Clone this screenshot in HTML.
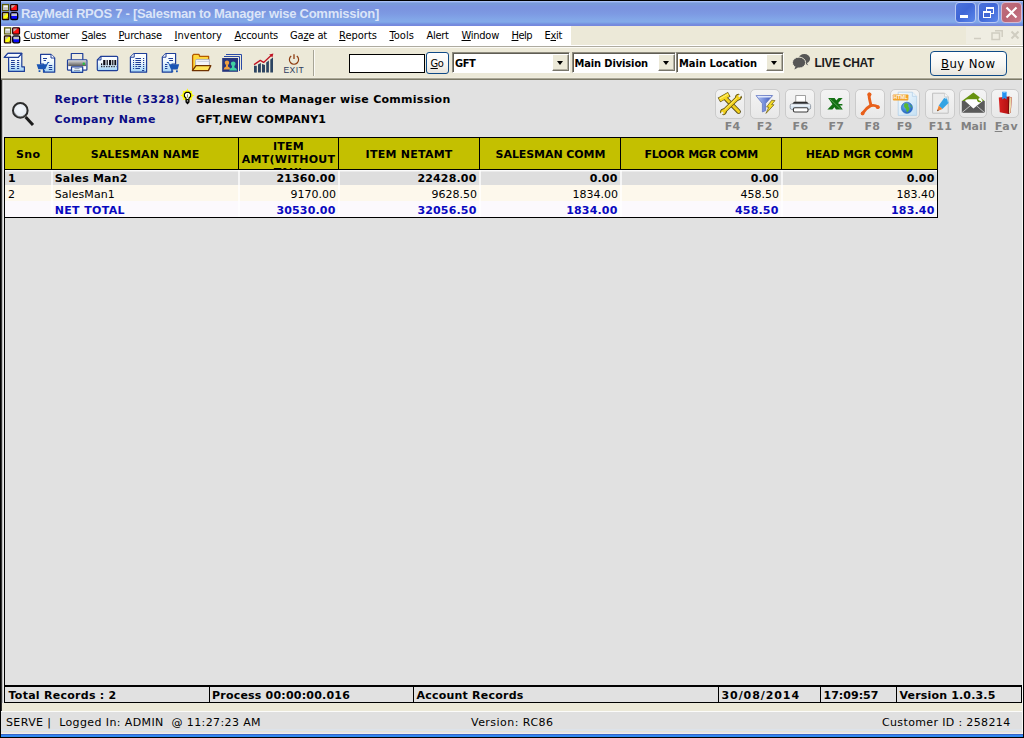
<!DOCTYPE html>
<html>
<head>
<meta charset="utf-8">
<title>RayMedi RPOS 7 - [Salesman to Manager wise Commission]</title>
<style>
*{box-sizing:border-box;margin:0;padding:0}
html,body{width:1024px;height:738px;overflow:hidden}
body{position:relative;background:#e1e1e1;font-family:"DejaVu Sans","Liberation Sans",sans-serif;font-size:11px;color:#000}
.a{position:absolute}
.t{position:absolute;white-space:pre;line-height:1}
u{text-decoration:underline;text-underline-offset:1px;text-decoration-thickness:1px}
svg{position:absolute;overflow:visible}
/* title bar */
#title{left:1px;top:1px;width:1022px;height:25px;background:linear-gradient(to bottom,#a9c0f5 0px,#a9c0f5 1px,#8aa8e8 1px,#8aa8e8 2px,#7a9adb 2px,#7a9adb 4px,#7b94e0 5px,#7b95e0 9px,#7d9ae3 13px,#82a6e8 18px,#82aae9 21px,#7a9ee4 22px,#7690e0 23px,#7488dd 24px,#7488dd 25px)}
.cb{position:absolute;top:2px;width:21px;height:21px;border-radius:4px;border:1px solid #b9c9f3;background:linear-gradient(135deg,#4a72dc 0%,#3f66d6 45%,#5a86ea 100%)}
.cb.x{background:linear-gradient(135deg,#c0707e 0%,#b96474 50%,#c87888 100%);border-color:#d5b9d0}
/* menu bar */
#menuw{left:1px;top:26px;width:570px;height:20px;background:#fff}
#menub{left:571px;top:26px;width:451px;height:20px;background:#ece9d8}
#mdi{left:966px;top:27px;width:56px;height:17px;background:#efede2}
#ml1{left:1px;top:45px;width:1022px;height:1px;background:#fff}
#ml2{left:1px;top:46px;width:1022px;height:1px;background:#aeaba0}
#ml3{left:1px;top:47px;width:1022px;height:1px;background:#fbfaf4}
/* toolbar */
#toolbar{left:1px;top:48px;width:1021px;height:30px;background:#ece9d8}
#tbbot{left:1px;top:77px;width:1021px;height:3px;background:linear-gradient(#efecde 0,#efecde 1px,#aaa796 1px,#aaa796 2px,#7c7a68 2px)}
#tsep{left:313px;top:50px;width:1px;height:26px;background:#a7a596}
#tsep2{left:314px;top:50px;width:1px;height:26px;background:#fbfaf5}
#srch{left:349px;top:54px;width:76px;height:19px;background:#fff;border:1px solid #000}
.btn{position:absolute;border:1px solid #0f4a86;border-radius:3px;background:linear-gradient(#ffffff 0%,#f6f5f1 60%,#e6e4dc 100%)}
.combo{position:absolute;top:52px;height:21px;background:#fff;border:1px solid;border-color:#8e8b7e #fff #fff #8e8b7e;box-shadow:inset 1px 1px 0 #5f5d54}
.combo i{position:absolute;right:0;top:1px;width:17px;height:17px;background:#ece9d8;border:1px solid;border-color:#fff #77756a #77756a #fff;box-shadow:inset -1px -1px 0 #b3b0a2}
.combo i:after{content:"";position:absolute;left:4px;top:6px;border:3.5px solid transparent;border-top:4px solid #000;border-bottom:0;width:0;height:0}
/* report toolbar buttons */
.rb{position:absolute;top:89px;width:30px;height:30px;border:1px solid #cbcbcb;border-radius:5px;background:linear-gradient(#f4f4f4,#e8e8e8)}
/* table */
#thead{left:4px;top:137px;width:934px;height:33px;background:#000}
.th{position:absolute;top:1px;height:31px;background:#c4c000;overflow:hidden}
.row{position:absolute;left:5px;width:932px;height:16px}
.cs{position:absolute;top:170px;width:2px;height:47px;background:rgba(255,255,255,.7)}
#tleft{left:4px;top:137px;width:1px;height:549px;background:#000}
#tright{left:937px;top:137px;width:1px;height:81px;background:#000}
#tbot{left:4px;top:217px;width:934px;height:1px;background:#000}
/* status */
#sbar{left:4px;top:685px;width:1018px;height:18px;border:1px solid #000;border-top-width:2px;background:#e1e1e1}
.ss{position:absolute;top:686px;width:1px;height:16px;background:#000}
#beige{left:1px;top:703px;width:1021px;height:8px;background:#ece9d8}
#bbar{left:1px;top:711px;width:1021px;height:18px;background:#e0e0e0;border-top:1px solid #fcfcfa}
#bb1{left:1px;top:729px;width:1021px;height:5px;background:linear-gradient(#dde3ea 0,#dde3ea 2px,#e2e4d6 2px,#e2e4d6 3px,#eadfea 3px,#eadfea 4px,#eef0e6 4px)}
#bb2{left:0;top:737px;width:1024px;height:1px;background:#000}
#blue{left:1px;top:734px;width:1022px;height:3px;background:linear-gradient(#3a64c8 0,#3a64c8 1px,#3088f0 1px)}
</style>
</head>
<body>
<div class="a" id="title"></div>
<div class="cb" style="left:955px"><div class="a" style="left:4px;top:12px;width:8px;height:3px;background:#fff"></div></div>
<div class="cb" style="left:978px">
 <div class="a" style="left:7px;top:4px;width:8px;height:7px;border:1px solid #fff;border-top-width:2px"></div>
 <div class="a" style="left:4px;top:8px;width:8px;height:7px;border:1px solid #fff;border-top-width:2px;background:#4268d6"></div>
</div>
<div class="cb x" style="left:1001px"><svg width="19" height="19" style="left:0;top:0" viewBox="0 0 19 19"><path d="M4.5 4.5 L14.5 14.5 M14.5 4.5 L4.5 14.5" stroke="#fff" stroke-width="2.2" stroke-linecap="butt" fill="none"/></svg></div>
<div class="a" id="menuw"></div>
<div class="a" id="menub"></div>
<div class="a" id="mdi"></div>
<svg width="60" height="14" style="left:968px;top:29px" viewBox="0 0 60 14">
 <g fill="none" stroke="#d0cdc1" stroke-width="1.5">
  <path d="M6 9.5 H13"/>
  <path d="M27 1.8 H34.2 V8" /><rect x="24" y="4" width="7.5" height="6.5"/>
  <path d="M43.5 2.5 L50.5 9.5 M50.5 2.5 L43.5 9.5" stroke-width="2"/>
 </g>
</svg>
<div class="a" id="ml1"></div>
<div class="a" id="ml2"></div>
<div class="a" id="ml3"></div>
<div class="a" id="toolbar"></div>
<div class="a" id="tbbot"></div>
<div class="a" id="tsep"></div><div class="a" id="tsep2"></div>
<div class="a" id="srch"></div>
<div class="btn" style="left:426px;top:52px;width:23px;height:22px"></div>
<div class="combo" style="left:452px;width:118px"><i></i></div>
<div class="combo" style="left:572px;width:104px"><i></i></div>
<div class="combo" style="left:676px;width:108px"><i></i></div>
<div class="btn" style="left:930px;top:51px;width:77px;height:25px;border-radius:4px"></div>
<!-- app icon (title + menu) -->
<svg width="17" height="17" style="left:2px;top:4px" viewBox="0 0 17 17">
 <g>
  <rect x="0.6" y="0.6" width="6" height="6" fill="#f6f6f6" stroke="#5c5c08" stroke-width="1.3"/>
  <rect x="1.3" y="3.2" width="4.6" height="2.7" fill="#c4c4c4"/>
  <rect x="8.7" y="0.5" width="6.8" height="6.2" rx="0.8" fill="#ff1010" stroke="#1c0000" stroke-width="1.25"/>
  <path d="M9.4 1.2 H13.6 L9.4 4.6 Z" fill="#b4b4b4"/>
  <rect x="0.5" y="8.7" width="6.2" height="6.8" rx="0.6" fill="#ffff10" stroke="#220404" stroke-width="1.3"/>
  <path d="M1.3 9.5 H5 L1.3 12.6 Z" fill="#b4b4b4"/>
  <path d="M4.2 15 H6.2 V12.6 Z" fill="#8a8a10"/>
  <rect x="8.7" y="8.7" width="7" height="6.8" rx="1.6" fill="#0a0aff" stroke="#000" stroke-width="1.3"/>
  <path d="M9.4 9.4 H15 V12 H9.4 Z" fill="#c4c4c4"/>
 </g>
</svg>
<svg width="17" height="17" style="left:4px;top:27px" viewBox="0 0 17 17">
 <g transform="translate(0,0.3)">
  <rect x="0.6" y="0.6" width="6" height="6" fill="#f6f6f6" stroke="#5c5c08" stroke-width="1.3"/>
  <rect x="1.3" y="3.2" width="4.6" height="2.7" fill="#c4c4c4"/>
  <rect x="8.7" y="0.5" width="6.8" height="6.2" rx="0.8" fill="#ff1010" stroke="#1c0000" stroke-width="1.25"/>
  <path d="M9.4 1.2 H13.6 L9.4 4.6 Z" fill="#b4b4b4"/>
  <rect x="0.5" y="8.7" width="6.2" height="6.8" rx="0.6" fill="#ffff10" stroke="#220404" stroke-width="1.3"/>
  <path d="M1.3 9.5 H5 L1.3 12.6 Z" fill="#b4b4b4"/>
  <path d="M4.2 15 H6.2 V12.6 Z" fill="#8a8a10"/>
  <rect x="8.7" y="8.7" width="7" height="6.8" rx="1.6" fill="#0a0aff" stroke="#000" stroke-width="1.3"/>
  <path d="M9.4 9.4 H15 V12 H9.4 Z" fill="#c4c4c4"/>
 </g>
</svg>
<!--TB0-->
<svg width="1024" height="140" style="left:0;top:0" viewBox="0 0 1024 140">
<defs>
 <linearGradient id="gb" x1="0" y1="0" x2="0" y2="1"><stop offset="0" stop-color="#ffffff"/><stop offset="0.45" stop-color="#eef7fd"/><stop offset="1" stop-color="#9fd2f6"/></linearGradient>
 <linearGradient id="gp" x1="0" y1="0" x2="0" y2="1"><stop offset="0" stop-color="#d8d8d8"/><stop offset="1" stop-color="#585858"/></linearGradient>
 <linearGradient id="gf" x1="0" y1="0" x2="1" y2="0"><stop offset="0" stop-color="#b4c6f4"/><stop offset="0.55" stop-color="#6f88d8"/><stop offset="1" stop-color="#3c55b0"/></linearGradient>
 <radialGradient id="gg" cx="0.4" cy="0.35" r="0.7"><stop offset="0" stop-color="#6fb8f0"/><stop offset="1" stop-color="#1c5fc0"/></radialGradient>
 <linearGradient id="gh" x1="0" y1="0" x2="1" y2="1"><stop offset="0" stop-color="#ffffff"/><stop offset="1" stop-color="#cfe6f6"/></linearGradient>
</defs>
<g stroke-linejoin="round" stroke-linecap="butt">
<!-- 1 scroll report -->
<g stroke="#1f3f98" stroke-width="1.2">
 <path d="M8.6 57.4 V71.4 H24.4 V66.8 H21.8 V53.4 H7.8 L4.3 57.4 H18.2 L21.8 53.4 M8.6 57.4 H18" fill="url(#gb)"/>
 <path d="M4.3 57.4 L7.8 53.4 H21.8 L18.2 57.4 Z" fill="#f4f9fd"/>
</g>
<g stroke="#1f3f98" stroke-width="1" fill="none">
 <path d="M11 60.5 H14.8 M17 60.5 H19.2 M11 62.5 H14.8 M17 62.5 H19.2 M11 64.5 H14.8 M17 64.5 H19.2 M11 66.5 H14.8 M17 66.5 H19.2 M11 68.5 H14.8 M17 68.5 H19.2"/>
</g>
<!-- 2 document + cart -->
<path d="M40.6 54.3 H51 L54.7 58 V72.2 H43.5 V64 H40.6 Z" fill="url(#gb)" stroke="#1f3f98" stroke-width="1.2"/>
<path d="M51 54.3 V58 H54.7" fill="#fff" stroke="#1f3f98" stroke-width="1"/>
<path d="M43 58.5 H47 M43.6 60.5 H46 M48.8 65.5 H52.2 M48.8 67.5 H52.2 M48.8 69.5 H52.2" stroke="#1f3f98" stroke-width="1" fill="none"/>
<path d="M36.6 64.3 H46.4 L47.6 62 H49.2 V63 H48.2 L45.3 69.2 H38.3 Z" fill="#1a55b4"/>
<rect x="38.6" y="70.2" width="1.8" height="1.8" fill="#1a55b4"/><rect x="43.2" y="70.2" width="1.8" height="1.8" fill="#1a55b4"/>
<!-- 3 printer -->
<rect x="71.3" y="53.5" width="11.5" height="7" fill="#efece0" stroke="#1f3f98" stroke-width="1.2"/>
<rect x="67.5" y="59.8" width="19.4" height="10.4" rx="0.8" fill="#fff" stroke="#1f3f98" stroke-width="1.2"/>
<rect x="68.2" y="60.5" width="18" height="5.6" fill="url(#gp)"/>
<circle cx="83.8" cy="63.8" r="1.2" fill="#28c040"/>
<rect x="71.5" y="66.8" width="11.2" height="5.5" fill="url(#gb)" stroke="#1f3f98" stroke-width="1.2"/>
<path d="M74.5 68.6 H79.5 M74 70.5 H80" stroke="#8a9ab0" stroke-width="0.9"/>
<!-- 4 barcode label -->
<path d="M101 56.3 H116.6 Q117.7 56.3 117.7 57.4 V69.5 Q117.7 70.6 116.6 70.6 H98.4 Q97.3 70.6 97.3 69.5 V59.9 Z" fill="url(#gb)" stroke="#1f3f98" stroke-width="1.2"/>
<path d="M101 56.3 V59.9 H97.3" fill="none" stroke="#1f3f98" stroke-width="1"/>
<g fill="#0a0a14"><rect x="101" y="63.4" width="1.2" height="1.8"/><rect x="103.2" y="60" width="2.2" height="5.2"/><rect x="106.6" y="60" width="1.2" height="5.2"/><rect x="109" y="60" width="2.2" height="5.2"/><rect x="112.2" y="60" width="1.2" height="5.2"/><rect x="114.4" y="60" width="1.8" height="5.2"/></g>
<path d="M101 66.7 H116.4" stroke="#0a0a14" stroke-width="1" stroke-dasharray="1.4 1.1"/>
<!-- 5 list doc -->
<path d="M134.2 53.5 H146.6 V72.2 H130.4 V57.2 Z" fill="url(#gb)" stroke="#1f3f98" stroke-width="1.2"/>
<path d="M134.2 53.5 V57.2 H130.4" fill="#fff" stroke="#1f3f98" stroke-width="1"/>
<g stroke="#1f3f98" stroke-width="1" fill="none">
 <path d="M135.4 58.5 H141 M135.4 60.5 H141 M135.4 62.5 H141 M135.4 64.5 H141 M135.4 66.5 H137.2 M138.2 66.5 H141 M135.4 68.5 H140"/>
 <path d="M133 60.5 H134.1 M133 62.5 H134.1 M133 64.5 H134.1 M133 66.5 H134.1 M133 68.5 H134.1 M143 58.5 H144.2 M143 60.5 H144.2 M143 62.5 H144.2 M143 64.5 H144.2 M143 66.5 H144.2 M143 68.5 H144.2 M142 70.5 H144.2"/>
</g>
<!-- 6 doc + cart (right) -->
<path d="M166 53.5 H175.6 V64 H172 V72.2 H162.3 V57.2 Z" fill="url(#gb)" stroke="#1f3f98" stroke-width="1.2"/>
<path d="M166 53.5 V57.2 H162.3" fill="#fff" stroke="#1f3f98" stroke-width="1"/>
<path d="M168.4 58.5 H173 M169.2 60.5 H173 M165 64.5 H167.4 M165 66.5 H167.4 M165 68.5 H167.4" stroke="#1f3f98" stroke-width="1" fill="none"/>
<path d="M166.8 62 H168.6 L169.6 64.2 H179.2 L177.6 69.5 H171 L168.2 63 H166.8 Z" fill="#1a55b4"/>
<rect x="171.4" y="70.4" width="1.8" height="1.8" fill="#1a55b4"/><rect x="176" y="70.4" width="1.8" height="1.8" fill="#1a55b4"/>
<!-- 7 folder -->
<path d="M192.6 70.4 V55.6 L193.6 54.4 H199 L199.8 56.4 H208.6 V65" fill="#ffd83c" stroke="#b35a00" stroke-width="1.3"/>
<path d="M195.6 66 V60.6 Q195.6 59.4 197 59.4 H209.4 V65.4" fill="#f4f4f8" stroke="#a8b0c4" stroke-width="0.9"/>
<path d="M197.4 61.4 H209.6" stroke="#c4cad8" stroke-width="0.9"/>
<path d="M196 65.6 H210.8 L208.4 70.6 H192.4 Z" fill="#ffe45a" stroke="#6f3200" stroke-width="1.3"/>
<!-- 8 people photos -->
<path d="M226 54.5 H241.5 V69.8 M224 56.5 H239.5 V71" fill="none" stroke="#2a4aa6" stroke-width="1"/>
<rect x="222.2" y="58" width="15.8" height="13.8" fill="#25357e"/>
<circle cx="227" cy="62.8" r="2.2" fill="#f0a040"/><path d="M223.6 69.4 Q224 67.2 226 66.6 V64.5 H228 V66.6 Q230 67.2 230.2 69.4 Z" fill="#f0a040"/>
<circle cx="233.2" cy="63.8" r="2.4" fill="#3fd2a2"/><path d="M229.2 70.4 Q229.6 68 232 67.4 V65.5 H234.4 V67.4 Q236.8 68 237.2 70.4 Z" fill="#3fd2a2"/>
<!-- 9 chart -->
<g fill="#2d4562"><path d="M254 65.8 H256.8 V72.6 H254 Z"/><path d="M258 64.4 L260.9 63 V72.6 H258 Z"/><path d="M262 64 L265 65 V72.6 H262 Z"/><path d="M266.2 62.6 L268.9 60.6 V72.6 H266.2 Z"/><path d="M270.3 59.6 L273 57.6 V72.6 H270.3 Z"/></g>
<path d="M254 64.6 L260.3 60.4 L263.6 62.4 L271.6 55" fill="none" stroke="#c01424" stroke-width="1.3"/>
<path d="M273.4 53.4 L269.2 54.4 L272.4 57.6 Z" fill="#c01424"/>
<!-- 10 exit power -->
<path d="M291.2 56 A4.6 4.6 0 1 0 296.8 56" fill="none" stroke="#8e3c10" stroke-width="1.2"/>
<path d="M294 54.2 V59" stroke="#8e3c10" stroke-width="1.3"/>
<!-- live chat bubbles -->
<g fill="#565656">
 <ellipse cx="804.3" cy="58.8" rx="5.8" ry="4.8"/><path d="M806.5 62.5 L808.4 65.6 L804.5 63.2 Z"/>
 <ellipse cx="799" cy="62.6" rx="6.6" ry="5.5" stroke="#ece9d8" stroke-width="1"/>
 <path d="M795.4 66.6 L794.4 69.4 L798.2 67.6 Z"/>
</g>
</g>
</svg>
<!--TB1-->
<div class="rb" style="left:715px"></div>
<div class="rb" style="left:750px"></div>
<div class="rb" style="left:785px"></div>
<div class="rb" style="left:820px"></div>
<div class="rb" style="left:855px"></div>
<div class="rb" style="left:890px"></div>
<div class="rb" style="left:925px"></div>
<div class="rb" style="left:959px;width:28px;height:29px"></div>
<div class="rb" style="left:991px;width:28px;height:29px"></div>
<!--RP0-->
<svg width="1024" height="140" style="left:0;top:0" viewBox="0 0 1024 140">
<defs>
 <radialGradient id="lens" cx="0.45" cy="0.4" r="0.7"><stop offset="0" stop-color="#f4f7fa"/><stop offset="1" stop-color="#dfe6ee"/></radialGradient>
 <linearGradient id="gy" x1="0" y1="0" x2="1" y2="1"><stop offset="0" stop-color="#ffe840"/><stop offset="1" stop-color="#e0b010"/></linearGradient>
 <linearGradient id="gpage" x1="0" y1="0" x2="1" y2="1"><stop offset="0" stop-color="#f8fcff"/><stop offset="1" stop-color="#c4e0f4"/></linearGradient>
 <linearGradient id="gred" x1="0" y1="0" x2="1" y2="0"><stop offset="0" stop-color="#d82020"/><stop offset="1" stop-color="#a80c0c"/></linearGradient>
</defs>
<!-- magnifier -->
<path d="M25.6 117 L33 125" stroke="#1c1c1c" stroke-width="3" stroke-linecap="butt"/>
<circle cx="20.3" cy="110.4" r="7.3" fill="url(#lens)" stroke="#2c2c2c" stroke-width="2"/>
<path d="M14.6 112.5 A6.2 6.2 0 0 0 24.8 115" fill="none" stroke="#777" stroke-width="0.8"/>
<!-- bulb -->
<g fill="#ffff00">
 <circle cx="187.4" cy="95.4" r="5.2"/>
 <path d="M187.4 88.2 L188.4 91 H186.4 Z M187.4 102.6 L188.4 99.8 H186.4 Z M180.2 95.4 L183 94.4 V96.4 Z M194.6 95.4 L191.8 94.4 V96.4 Z M182.4 90.4 L185 91.8 L183.8 93 Z M192.4 90.4 L189.8 91.8 L191 93 Z M182.4 100.4 L185 99 L183.8 97.8 Z M192.4 100.4 L189.8 99 L191 97.8 Z"/>
</g>
<path d="M186 92.4 H189 L190.6 94 V96.4 L189 98 V102 L187.5 103.6 L186 102 V98 L184.4 96.4 V94 Z" fill="#fffff0" stroke="#000" stroke-width="1.1" stroke-linejoin="miter"/>
<path d="M186.2 99 H188.8 V102 L187.5 103.4 L186.2 102 Z" fill="#000"/>
<rect x="187" y="100.4" width="1" height="1" fill="#fff"/>
<path d="M187.5 94.4 V97.6" stroke="#6a8a30" stroke-width="0.8"/>
<!-- F4 tools -->
<g stroke-linecap="round" fill="none">
 <path d="M726 98.8 L738.6 111.6" stroke="#5a4c12" stroke-width="4.6"/>
 <path d="M719 100 L729.2 94.2" stroke="#5a4c12" stroke-width="5.2" stroke-linecap="butt"/>
 <path d="M726 98.8 L738.6 111.6" stroke="#f2d01c" stroke-width="2.9"/>
 <path d="M719.6 99.7 L728.6 94.5" stroke="#f6d824" stroke-width="3.9" stroke-linecap="butt"/>
 <path d="M720 98.6 L728 94.2" stroke="#fff27a" stroke-width="1"/>
 <path d="M724.6 110.6 L737.2 98.4" stroke="#5a4c12" stroke-width="4.4"/>
 <circle cx="738.4" cy="97.2" r="2.9" fill="#f2d01c" stroke="#5a4c12" stroke-width="1"/>
 <circle cx="723.4" cy="111.8" r="2.9" fill="#f2d01c" stroke="#5a4c12" stroke-width="1"/>
 <path d="M724.6 110.6 L737.2 98.4" stroke="#f2d01c" stroke-width="3"/>
 <path d="M725 109.4 L736.6 98.2" stroke="#fff27a" stroke-width="0.9"/>
 <path d="M738.8 96.8 L741.6 93.8" stroke="#efefef" stroke-width="2.2" stroke-linecap="butt"/>
 <path d="M723 112.2 L720.2 115.2" stroke="#ececec" stroke-width="2.2" stroke-linecap="butt"/>
</g>
<!-- F2 filter -->
<path d="M756 95.6 H772.6 L765.6 103.6 V110.6 L762.4 112 V103.6 Z" fill="url(#gf)" stroke="#5a70c0" stroke-width="0.7"/>
<path d="M757 96 H771.6 L770.4 97.4 H758.2 Z" fill="#dfe8fc"/>
<path d="M771.8 100.2 L775 100.6 L771.6 104.6 L774 104.8 L766 113.4 L768.8 107.2 L766.6 107 Z" fill="#f4dc28" stroke="#6a5a10" stroke-width="0.7" stroke-linejoin="round"/>
<!-- F6 printer -->
<rect x="795.8" y="95.6" width="9.6" height="6.6" fill="#fff" stroke="#8a8a8a" stroke-width="0.8"/>
<path d="M794 101.8 H807 L809 104.2 H792 Z" fill="#2e2e2e"/>
<rect x="790.2" y="104" width="20.4" height="5.4" rx="1.6" fill="#dbe8f4" stroke="#8a929c" stroke-width="0.9"/>
<path d="M791 105 H810" stroke="#fff" stroke-width="0.9"/>
<rect x="793.4" y="107.8" width="14.6" height="4.2" rx="1.4" fill="#fff" stroke="#3a3a3a" stroke-width="1.1"/>
<!-- F7 excel -->
<g fill="#137013">
 <path d="M828.2 98 H834.6 L842.8 109.6 H836 Z"/>
 <path d="M838.6 98 H842.6 L832.4 109.6 H827.4 Z"/>
 <path d="M836.8 104 H842.4 V105.6 H838 Z"/>
</g>
<path d="M830 99 L841 109.4" stroke="#7ec07e" stroke-width="0.6"/>
<!-- F8 pdf -->
<g fill="none" stroke="#e8601c" stroke-linecap="round">
 <path d="M869.4 94 C868.2 98 870.6 102 871 105.4" stroke-width="2.8"/>
 <path d="M871 105.4 C866 108 864 111.4 862.4 113.6" stroke-width="2.9"/>
 <path d="M871 105.6 C873.6 105 876 105.6 878 107" stroke-width="2.9"/>
</g>
<circle cx="869.4" cy="94.6" r="2.1" fill="#e8601c"/><circle cx="877.8" cy="107.2" r="1.9" fill="#e8601c"/><circle cx="862.6" cy="113.4" r="1.9" fill="#e8601c"/>
<!-- F9 html -->
<path d="M898.2 92.2 H912.4 L916.6 96.4 V115.4 H898.2 Z" fill="url(#gpage)" stroke="#b4d0e8" stroke-width="0.8"/>
<path d="M912.4 92.2 V96.4 H916.6" fill="#e8f4fc" stroke="#b4d0e8" stroke-width="0.7"/>
<rect x="892.8" y="94.4" width="15.6" height="6" rx="0.8" fill="#f2a22c"/>
<text x="893.6" y="99.4" font-family="'Liberation Sans','DejaVu Sans',sans-serif" font-size="5.4" font-weight="bold" fill="#fff8e8" textLength="14" lengthAdjust="spacingAndGlyphs">HTML</text>
<circle cx="906.9" cy="107.8" r="5.6" fill="url(#gg)" stroke="#2c68b8" stroke-width="0.6"/>
<path d="M904.6 103.4 C906.4 102.8 908.4 103.4 908.6 104.8 C907.6 106 908.8 107 909.4 108.6 C909.4 110.4 908 111.4 907.2 112.6 C906.2 111 906.6 109.4 905.6 108.4 C904.2 107.4 903.4 105.4 904.6 103.4 Z" fill="#58b830"/>
<path d="M910.2 104.4 C911.4 105.4 912 106.8 912 108 C911.2 107.2 910.4 106 910.2 104.4 Z" fill="#58b830"/>
<!-- F11 edit -->
<path d="M932.6 93.2 H944.6 L948.2 96.8 V113.2 H932.6 Z" fill="#ececec" stroke="#c0c0c0" stroke-width="1"/>
<path d="M944.6 93.2 V96.8 H948.2" fill="#fafafa" stroke="#c6c6c6" stroke-width="0.7"/>
<path d="M946.6 97.4 L949 102.4 L942.4 109 L938.8 105.4 L944 98.2 Z" fill="#34a4e4"/>
<path d="M938.8 105.4 L942.4 109 L937 111.2 Z" fill="#f08434"/>
<path d="M937 111.2 L937.8 109.6 L938.8 110.5 Z" fill="#5a3a20"/>
<path d="M945 98.4 L947.4 98 L948.4 102.6" fill="none" stroke="#d8e8f4" stroke-width="0.8"/>
<!-- Mail -->
<path d="M962 101 L973.4 92.4 L984.6 101 Z" fill="#66920f"/>
<rect x="961.8" y="101" width="23" height="11.8" fill="#5a5a5a"/>
<path d="M965 101 Q965.4 99.2 968 99.2 H977 Q980.6 99 979.6 96.6 L982.8 101 L973.4 108.4 Z" fill="#fff"/>
<path d="M977.4 99 Q978 102 981 101.6" fill="none" stroke="#66920f" stroke-width="1.3"/>
<path d="M961.8 112.8 L970.2 105.8 M984.8 112.8 L976.6 105.8" stroke="#dcdcdc" stroke-width="0.8"/>
<!-- Fav -->
<path d="M1002.2 91.8 H1006.6 V99.6 L1004.4 98 L1002.2 99.6 Z" fill="#2492f0"/>
<path d="M1003.2 92.4 H1005.6" stroke="#9ad0ff" stroke-width="0.8"/>
<path d="M998.8 97.6 L1009.2 96.4 L1011.8 97.6 L1010.8 112.6 L1008.6 114 L999.8 112.2 Z" fill="url(#gred)"/>
<path d="M1009.2 96.8 L1011.6 97.8 L1010.6 112.4 L1008.8 113.6 Z" fill="#ead8a8"/>
<path d="M1008.8 96.8 L1008.4 113.8" stroke="#6a0808" stroke-width="0.8"/>
<path d="M1002.2 97 V99.6 L1004.4 98 L1006.6 99.6 V96.6" fill="#2492f0"/>
</svg>
<!--RP1-->
<div class="a" id="thead">
 <div class="th" style="left:1px;width:46px"></div>
 <div class="th" style="left:48px;width:186px"></div>
 <div class="th" style="left:235px;width:99px;font-weight:bold;text-align:center;line-height:13px;padding-top:2px;letter-spacing:0.25px">ITEM AMT(WITHOUT TAX)</div>
 <div class="th" style="left:335px;width:140px"></div>
 <div class="th" style="left:476px;width:140px"></div>
 <div class="th" style="left:617px;width:160px"></div>
 <div class="th" style="left:778px;width:155px"></div>
</div>
<div class="row" style="top:170px;height:15px;background:linear-gradient(#fbfbfb 0,#fbfbfb 1px,#ebebeb 1px,#ebebeb 2px,#dedede 2px)"></div>
<div class="row" style="top:185px;background:#fdf8ec"></div>
<div class="row" style="top:201px;height:16px;background:#fcf9fd"></div>
<div class="cs" style="left:51px"></div><div class="cs" style="left:238px"></div><div class="cs" style="left:338px"></div><div class="cs" style="left:479px"></div><div class="cs" style="left:620px"></div><div class="cs" style="left:781px"></div>
<div class="a" id="tbot"></div>
<div class="a" id="tleft"></div>
<div class="a" id="tright"></div>
<div class="a" id="sbar"></div>
<div class="ss" style="left:209px"></div><div class="ss" style="left:413px"></div><div class="ss" style="left:718px"></div><div class="ss" style="left:820px"></div><div class="ss" style="left:896px"></div>
<div class="a" id="beige"></div>
<div class="a" id="bbar"></div>
<div class="a" id="bb1"></div><div class="a" id="bb2"></div>
<div class="a" id="blue"></div>

<!-- text -->
<div class="t" style="left:21px;top:7px;font-family:'Liberation Sans','DejaVu Sans',sans-serif;font-size:13px;font-weight:700;color:#dbe5f8;letter-spacing:-0.26px;">RayMedi RPOS 7 - [Salesman to Manager wise Commission]</div>
<div class="t" style="left:23.5px;top:30px;font-family:'DejaVu Sans Condensed','Liberation Sans',sans-serif;font-size:11px;letter-spacing:-0.322px;"><u>C</u>ustomer</div>
<div class="t" style="left:81.5px;top:30px;font-family:'DejaVu Sans Condensed','Liberation Sans',sans-serif;font-size:11px;letter-spacing:-0.372px;"><u>S</u>ales</div>
<div class="t" style="left:118.5px;top:30px;font-family:'DejaVu Sans Condensed','Liberation Sans',sans-serif;font-size:11px;letter-spacing:-0.176px;"><u>P</u>urchase</div>
<div class="t" style="left:174.5px;top:30px;font-family:'DejaVu Sans Condensed','Liberation Sans',sans-serif;font-size:11px;letter-spacing:0.026px;"><u>I</u>nventory</div>
<div class="t" style="left:234.5px;top:30px;font-family:'DejaVu Sans Condensed','Liberation Sans',sans-serif;font-size:11px;letter-spacing:-0.199px;"><u>A</u>ccounts</div>
<div class="t" style="left:290.0px;top:30px;font-family:'DejaVu Sans Condensed','Liberation Sans',sans-serif;font-size:11px;letter-spacing:-0.158px;">Ga<u>z</u>e at</div>
<div class="t" style="left:339.0px;top:30px;font-family:'DejaVu Sans Condensed','Liberation Sans',sans-serif;font-size:11px;letter-spacing:0.011px;"><u>R</u>eports</div>
<div class="t" style="left:389.5px;top:30px;font-family:'DejaVu Sans Condensed','Liberation Sans',sans-serif;font-size:11px;letter-spacing:0.062px;"><u>T</u>ools</div>
<div class="t" style="left:426.5px;top:30px;font-family:'DejaVu Sans Condensed','Liberation Sans',sans-serif;font-size:11px;letter-spacing:-0.312px;">Alert</div>
<div class="t" style="left:461.5px;top:30px;font-family:'DejaVu Sans Condensed','Liberation Sans',sans-serif;font-size:11px;letter-spacing:-0.25px;"><u>W</u>indow</div>
<div class="t" style="left:511.5px;top:30px;font-family:'DejaVu Sans Condensed','Liberation Sans',sans-serif;font-size:11px;letter-spacing:-0.52px;"><u>H</u>elp</div>
<div class="t" style="left:544.5px;top:30px;font-family:'DejaVu Sans Condensed','Liberation Sans',sans-serif;font-size:11px;letter-spacing:-0.309px;">E<u>x</u>it</div>
<div class="t" style="left:430.5px;top:58px;font-family:'DejaVu Sans Condensed','Liberation Sans',sans-serif;font-size:11px;letter-spacing:-0.367px;"><u>G</u>o</div>
<div class="t" style="left:455px;top:58px;font-family:'DejaVu Sans Condensed','Liberation Sans',sans-serif;font-size:11px;font-weight:700;letter-spacing:-0.38px;">GFT</div>
<div class="t" style="left:574.5px;top:58px;font-family:'DejaVu Sans Condensed','Liberation Sans',sans-serif;font-size:11px;font-weight:700;letter-spacing:-0.114px;">Main Division</div>
<div class="t" style="left:679px;top:58px;font-family:'DejaVu Sans Condensed','Liberation Sans',sans-serif;font-size:11px;font-weight:700;">Main Location</div>
<div class="t" style="left:814.5px;top:57px;font-family:'Liberation Sans','DejaVu Sans',sans-serif;font-size:12px;font-weight:700;color:#1c1c1c;letter-spacing:-0.328px;">LIVE CHAT</div>
<div class="t" style="left:941px;top:57px;font-family:'DejaVu Sans Condensed','Liberation Sans',sans-serif;font-size:13px;letter-spacing:0.422px;letter-spacing:0.4px;"><u>B</u>uy Now</div>
<div class="t" style="left:283.5px;top:66px;font-family:'Liberation Sans','DejaVu Sans',sans-serif;font-size:8.6px;color:#2e3c5e;letter-spacing:0.348px;">EXIT</div>
<div class="t" style="left:54.5px;top:94px;font-family:'DejaVu Sans','Liberation Sans',sans-serif;font-size:11px;font-weight:700;color:#0c0c84;letter-spacing:0.377px;">Report Title (3328)</div>
<div class="t" style="left:196px;top:94px;font-family:'DejaVu Sans','Liberation Sans',sans-serif;font-size:11px;font-weight:700;letter-spacing:0.275px;">Salesman to Manager wise Commission</div>
<div class="t" style="left:54.5px;top:114px;font-family:'DejaVu Sans','Liberation Sans',sans-serif;font-size:11px;font-weight:700;color:#0c0c84;letter-spacing:0.377px;">Company Name</div>
<div class="t" style="left:196px;top:114px;font-family:'DejaVu Sans','Liberation Sans',sans-serif;font-size:11px;font-weight:700;letter-spacing:0.118px;">GFT,NEW COMPANY1</div>
<div class="t" style="left:724.7px;top:121px;font-family:'DejaVu Sans','Liberation Sans',sans-serif;font-size:11px;font-weight:700;color:#828282;letter-spacing:0.414px;">F4</div>
<div class="t" style="left:756.7px;top:121px;font-family:'DejaVu Sans','Liberation Sans',sans-serif;font-size:11px;font-weight:700;color:#828282;letter-spacing:0.564px;">F2</div>
<div class="t" style="left:792.5px;top:121px;font-family:'DejaVu Sans','Liberation Sans',sans-serif;font-size:11px;font-weight:700;color:#828282;letter-spacing:0.564px;">F6</div>
<div class="t" style="left:828.6px;top:121px;font-family:'DejaVu Sans','Liberation Sans',sans-serif;font-size:11px;font-weight:700;color:#828282;letter-spacing:0.264px;">F7</div>
<div class="t" style="left:864.4px;top:121px;font-family:'DejaVu Sans','Liberation Sans',sans-serif;font-size:11px;font-weight:700;color:#828282;letter-spacing:0.414px;">F8</div>
<div class="t" style="left:896.7px;top:121px;font-family:'DejaVu Sans','Liberation Sans',sans-serif;font-size:11px;font-weight:700;color:#828282;letter-spacing:0.414px;">F9</div>
<div class="t" style="left:928.7px;top:121px;font-family:'DejaVu Sans','Liberation Sans',sans-serif;font-size:11px;font-weight:700;color:#828282;letter-spacing:0.157px;">F11</div>
<div class="t" style="left:960.7px;top:121px;font-family:'DejaVu Sans','Liberation Sans',sans-serif;font-size:11px;font-weight:700;color:#828282;letter-spacing:-0.03px;">Mail</div>
<div class="t" style="left:994.7px;top:121px;font-family:'DejaVu Sans','Liberation Sans',sans-serif;font-size:11px;font-weight:700;color:#828282;letter-spacing:0.777px;"><u>F</u>av</div>
<div class="t" style="left:-72px;width:200px;text-align:center;top:149px;font-family:'DejaVu Sans','Liberation Sans',sans-serif;font-size:11px;font-weight:700;letter-spacing:0.312px;text-indent:0.312px;">Sno</div>
<div class="t" style="left:45px;width:200px;text-align:center;top:149px;font-family:'DejaVu Sans','Liberation Sans',sans-serif;font-size:11px;font-weight:700;letter-spacing:0.072px;text-indent:0.072px;">SALESMAN NAME</div>
<div class="t" style="left:309px;width:200px;text-align:center;top:149px;font-family:'DejaVu Sans','Liberation Sans',sans-serif;font-size:11px;font-weight:700;letter-spacing:0.253px;text-indent:0.253px;">ITEM NETAMT</div>
<div class="t" style="left:450.5px;width:200px;text-align:center;top:149px;font-family:'DejaVu Sans','Liberation Sans',sans-serif;font-size:11px;font-weight:700;letter-spacing:-0.073px;text-indent:-0.073px;">SALESMAN COMM</div>
<div class="t" style="left:601.25px;width:200px;text-align:center;top:149px;font-family:'DejaVu Sans','Liberation Sans',sans-serif;font-size:11px;font-weight:700;letter-spacing:-0.231px;text-indent:-0.231px;">FLOOR MGR COMM</div>
<div class="t" style="left:759.5px;width:200px;text-align:center;top:149px;font-family:'DejaVu Sans','Liberation Sans',sans-serif;font-size:11px;font-weight:700;letter-spacing:-0.196px;text-indent:-0.196px;">HEAD MGR COMM</div>
<div class="t" style="left:8px;top:173px;font-family:'DejaVu Sans','Liberation Sans',sans-serif;font-size:11px;font-weight:700;">1</div>
<div class="t" style="left:54.7px;top:173px;font-family:'DejaVu Sans','Liberation Sans',sans-serif;font-size:11px;font-weight:700;letter-spacing:0.219px;">Sales Man2</div>
<div class="t" style="right:688.5px;top:173px;font-family:'DejaVu Sans','Liberation Sans',sans-serif;font-size:11px;font-weight:700;letter-spacing:0.17px;">21360.00</div>
<div class="t" style="right:547.5px;top:173px;font-family:'DejaVu Sans','Liberation Sans',sans-serif;font-size:11px;font-weight:700;letter-spacing:0.17px;">22428.00</div>
<div class="t" style="right:406.5px;top:173px;font-family:'DejaVu Sans','Liberation Sans',sans-serif;font-size:11px;font-weight:700;letter-spacing:0.17px;">0.00</div>
<div class="t" style="right:245.5px;top:173px;font-family:'DejaVu Sans','Liberation Sans',sans-serif;font-size:11px;font-weight:700;letter-spacing:0.17px;">0.00</div>
<div class="t" style="right:89.5px;top:173px;font-family:'DejaVu Sans','Liberation Sans',sans-serif;font-size:11px;font-weight:700;letter-spacing:0.17px;">0.00</div>
<div class="t" style="left:8px;top:189px;font-family:'DejaVu Sans','Liberation Sans',sans-serif;font-size:11px;">2</div>
<div class="t" style="left:54.7px;top:189px;font-family:'DejaVu Sans','Liberation Sans',sans-serif;font-size:11px;letter-spacing:0.08px;">SalesMan1</div>
<div class="t" style="right:688px;top:189px;font-family:'DejaVu Sans','Liberation Sans',sans-serif;font-size:11px;">9170.00</div>
<div class="t" style="right:547px;top:189px;font-family:'DejaVu Sans','Liberation Sans',sans-serif;font-size:11px;">9628.50</div>
<div class="t" style="right:406px;top:189px;font-family:'DejaVu Sans','Liberation Sans',sans-serif;font-size:11px;">1834.00</div>
<div class="t" style="right:245px;top:189px;font-family:'DejaVu Sans','Liberation Sans',sans-serif;font-size:11px;">458.50</div>
<div class="t" style="right:89px;top:189px;font-family:'DejaVu Sans','Liberation Sans',sans-serif;font-size:11px;">183.40</div>
<div class="t" style="left:54.7px;top:205px;font-family:'DejaVu Sans','Liberation Sans',sans-serif;font-size:11px;font-weight:700;color:#0808c0;letter-spacing:0.356px;">NET TOTAL</div>
<div class="t" style="right:688.5px;top:205px;font-family:'DejaVu Sans','Liberation Sans',sans-serif;font-size:11px;font-weight:700;color:#0808c0;letter-spacing:0.17px;">30530.00</div>
<div class="t" style="right:547.5px;top:205px;font-family:'DejaVu Sans','Liberation Sans',sans-serif;font-size:11px;font-weight:700;color:#0808c0;letter-spacing:0.17px;">32056.50</div>
<div class="t" style="right:406.5px;top:205px;font-family:'DejaVu Sans','Liberation Sans',sans-serif;font-size:11px;font-weight:700;color:#0808c0;letter-spacing:0.17px;">1834.00</div>
<div class="t" style="right:245.5px;top:205px;font-family:'DejaVu Sans','Liberation Sans',sans-serif;font-size:11px;font-weight:700;color:#0808c0;letter-spacing:0.17px;">458.50</div>
<div class="t" style="right:89.5px;top:205px;font-family:'DejaVu Sans','Liberation Sans',sans-serif;font-size:11px;font-weight:700;color:#0808c0;letter-spacing:0.17px;">183.40</div>
<div class="t" style="left:8.5px;top:690px;font-family:'DejaVu Sans','Liberation Sans',sans-serif;font-size:11px;font-weight:700;letter-spacing:0.267px;">Total Records : 2</div>
<div class="t" style="left:212px;top:690px;font-family:'DejaVu Sans','Liberation Sans',sans-serif;font-size:11px;font-weight:700;letter-spacing:0.209px;">Process 00:00:00.016</div>
<div class="t" style="left:416.5px;top:690px;font-family:'DejaVu Sans','Liberation Sans',sans-serif;font-size:11px;font-weight:700;letter-spacing:0.219px;">Account Records</div>
<div class="t" style="left:721.5px;top:690px;font-family:'DejaVu Sans','Liberation Sans',sans-serif;font-size:11px;font-weight:700;letter-spacing:0.923px;">30/08/2014</div>
<div class="t" style="left:823.5px;top:690px;font-family:'DejaVu Sans','Liberation Sans',sans-serif;font-size:11px;font-weight:700;letter-spacing:0.033px;">17:09:57</div>
<div class="t" style="left:899.5px;top:690px;font-family:'DejaVu Sans','Liberation Sans',sans-serif;font-size:11px;font-weight:700;letter-spacing:0.168px;">Version 1.0.3.5</div>
<div class="t" style="left:6px;top:717px;font-family:'DejaVu Sans','Liberation Sans',sans-serif;font-size:11px;letter-spacing:0.392px;">SERVE |  Logged In: ADMIN  @ 11:27:23 AM</div>
<div class="t" style="left:471px;top:717px;font-family:'DejaVu Sans','Liberation Sans',sans-serif;font-size:11px;letter-spacing:0.466px;">Version: RC86</div>
<div class="t" style="left:882px;top:717px;font-family:'DejaVu Sans','Liberation Sans',sans-serif;font-size:11px;letter-spacing:0.358px;">Customer ID : 258214</div>
<div class="a" style="left:0;top:0;width:1024px;height:1px;background:#000"></div>
<div class="a" style="left:0;top:0;width:1px;height:738px;background:#000"></div>
<div class="a" style="left:1px;top:80px;width:1px;height:631px;background:#333"></div>
<div class="a" style="left:2px;top:80px;width:1px;height:623px;background:#bdbdbd"></div>
<div class="a" style="left:3px;top:80px;width:1px;height:623px;background:#ebebeb"></div>
<div class="a" style="left:1022px;top:47px;width:1px;height:687px;background:#f6f6f4"></div>
<div class="a" style="left:1023px;top:0;width:1px;height:738px;background:#000"></div>

</body>
</html>
